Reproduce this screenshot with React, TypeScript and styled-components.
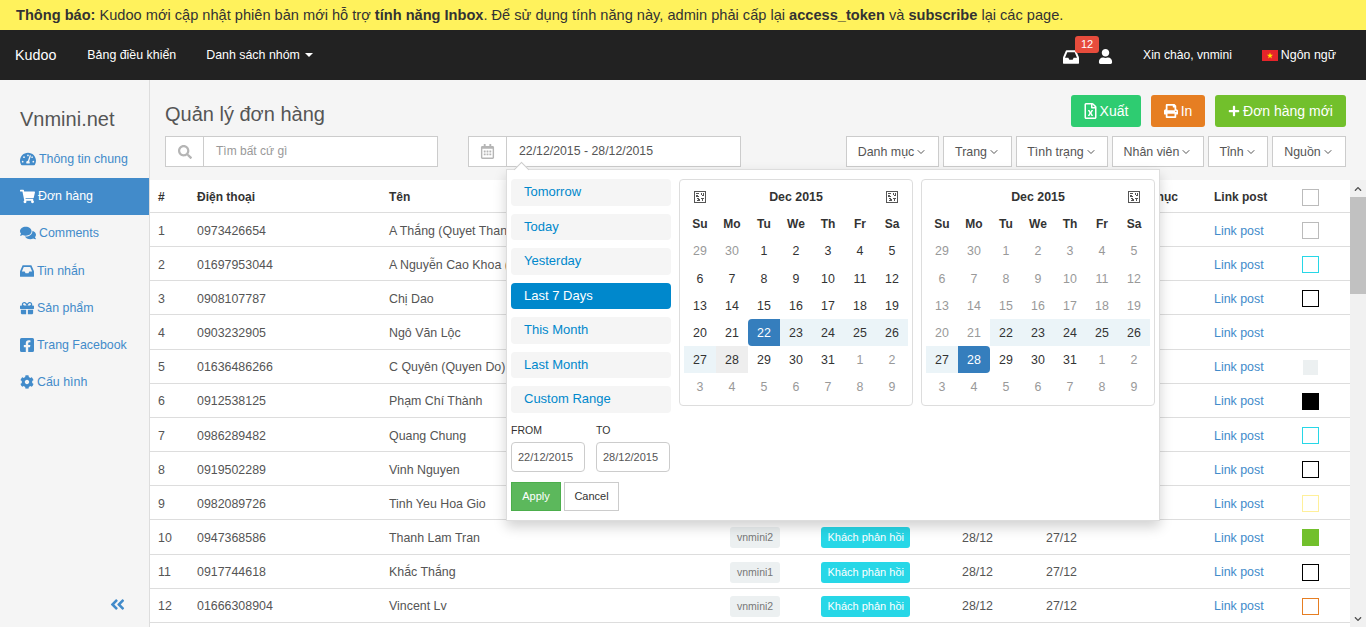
import React from 'react';
import styled, { createGlobalStyle } from 'styled-components';
import {
  FaTachometerAlt, FaShoppingCart, FaComments, FaGift, FaFacebookSquare, FaCog,
  FaSearch, FaRegCalendarAlt, FaAngleDoubleLeft, FaRegFileExcel, FaPrint, FaPlus, FaUser,
  FaChevronUp, FaChevronDown,
} from 'react-icons/fa';
import { ChevronDown } from 'lucide-react';

const Global = createGlobalStyle`
  html, body { margin: 0; padding: 0; height: 100%; overflow: hidden; background: #f5f5f5; }
  body { font-family: "Liberation Sans", Arial, sans-serif; font-size: 12.4px; color: #333; }
  * { box-sizing: border-box; }
`;

const Page = styled.div`width: 1366px; height: 627px; display: flex; flex-direction: column; overflow: hidden;`;
const Notice = styled.div`height: 30px; flex: none; background: #fff25c; padding: 0 16px; line-height: 30px; font-size: 14.6px; color: #333; white-space: nowrap; b { font-weight: 700; }`;
const Nav = styled.nav`height: 50px; flex: none; background: #222; color: #fff; display: flex; align-items: center; padding: 0 15px; font-size: 12.4px;`;
const Brand = styled.span`font-size: 14.3px; margin-right: 31px;`;
const NavLink = styled.span`margin-right: 30px; display: inline-flex; align-items: center; gap: 5px;`;
const Caret = styled.i`width: 0; height: 0; border-left: 4px solid transparent; border-right: 4px solid transparent; border-top: 4px solid #fff;`;
const NavRight = styled.div`margin-left: auto; display: flex; align-items: center;`;
const IconWrap = styled.span`position: relative; display: inline-flex; width: 17px; height: 17px; align-items: center; margin-right: 18px; margin-top: 3px;`;
const Count = styled.span`position: absolute; left: 12px; top: -12px; width: 24px; height: 17px; border-radius: 3px; background: #e74c3c; color: #fff; font-size: 11px; line-height: 17px; text-align: center;`;
const UserIcon = styled.span`display: inline-flex; margin-right: 30px; margin-top: 3px;`;
const Greeting = styled.span`margin-right: 30px; font-size: 12.1px;`;
const Lang = styled.span`display: inline-flex; align-items: center; gap: 3px; margin-right: 15px;`;

const Body = styled.div`flex: 1; display: flex; min-height: 0;`;
const Sidebar = styled.aside`width: 150px; flex: none; border-right: 1px solid #ddd; background: #f5f5f5; padding-top: 27px; position: relative;`;
const Site = styled.div`font-size: 20px; color: #555; padding-left: 20px; height: 24px; line-height: 24px; margin-bottom: 9.6px;`;
const SideItem = styled.div<{ $active?: boolean; $spaced?: boolean }>`
  display: flex; align-items: center; gap: 3px; height: 37px; margin-bottom: ${p => (p.$spaced ? 1 : 0)}px; padding-left: 20px; font-size: 12.4px;
  color: ${p => (p.$active ? '#fff' : '#428bca')};
  background: ${p => (p.$active ? '#428bca' : 'transparent')};
`;
const FbIcon = styled(FaFacebookSquare)`width: 14px; height: 16px;`;
const Collapse = styled.span`position: absolute; left: 109px; bottom: 14px; color: #428bca; display: inline-flex;`;

const Main = styled.main`flex: 1; min-width: 0; display: flex; flex-direction: column; position: relative;`;
const Head = styled.div`height: 100px; flex: none; padding: 0 20px 0 15px; display: flex; flex-direction: column;`;
const TitleRow = styled.div`height: 56px; display: flex; justify-content: space-between; padding-top: 15px;`;
const Title = styled.h1`margin: 4px 0 0; font-weight: 400; font-size: 20px; line-height: 30px; color: #555;`;
const Actions = styled.div`display: flex; gap: 10px;`;
const ActionBtn = styled.span<{ $bg: string; $w: number }>`
  height: 32px; width: ${p => p.$w}px; background: ${p => p.$bg}; color: #fff; border-radius: 3px; font-size: 14px;
  display: inline-flex; align-items: center; justify-content: center; gap: 3px;
`;
const FileIcon = styled(FaRegFileExcel)`width: 13px; height: 16px;`;
const FilterRow = styled.div`display: flex; align-items: flex-start;`;
const InputGroup = styled.div<{ $w: number; $mr?: number }>`
  width: ${p => p.$w}px; height: 31px; margin-right: ${p => p.$mr ?? 0}px; background: #fff; border: 1px solid #ccc; display: flex; flex: none;
`;
const Addon = styled.span`width: 38px; flex: none; display: flex; align-items: center; justify-content: center; color: #b5b5b5; border-right: 1px solid #ccc;`;
const InputText = styled.span<{ $muted?: boolean }>`padding-left: 12px; line-height: 28px; font-size: ${p => (p.$muted ? 12 : 12.3)}px; color: ${p => (p.$muted ? '#999' : '#555')};`;
const Filters = styled.div`margin-left: auto; display: flex; gap: 4px;`;
const FilterBtn = styled.span<{ $w: number }>`
  width: ${p => p.$w}px; height: 31px; background: #fff; border: 1px solid #ccc; color: #555; font-size: 12.4px;
  display: inline-flex; align-items: center; justify-content: center; gap: 1px;
`;

const TableArea = styled.div`flex: 1; min-height: 0; display: flex;`;
const TableBox = styled.div`width: 1200px; background: #fff; overflow: hidden;`;
const COLS = '39px 192px 341px 91px 141px 84px 74px 94px 88px 56px';
const Row = styled.div<{ $head?: boolean }>`
  display: grid; grid-template-columns: ${COLS}; height: ${p => (p.$head ? 33 : 34.17)}px; align-items: center; padding-top: 2px;
  border-bottom: 1px solid #ddd; font-weight: ${p => (p.$head ? 700 : 400)}; color: ${p => (p.$head ? '#333' : '#555')};
  font-size: ${p => (p.$head ? 12 : 12.4)}px; white-space: nowrap;
`;
const Cell = styled.div`padding-left: 8px;`;
const LinkPost = styled.span`color: #428bca;`;
const Swatch = styled.i<{ $border?: string; $fill?: string }>`
  display: block; width: 17px; height: 17px; border: 1px solid ${p => p.$border ?? 'transparent'}; background: ${p => p.$fill ?? 'transparent'};
  background-clip: padding-box;
`;
const GreyTag = styled.span`display: inline-block; height: 21px; line-height: 21px; padding: 0 7px; border-radius: 3px; background: #ecf0f1; color: #777; font-size: 10.5px;`;
const StatusTag = styled.span`display: inline-block; height: 21px; line-height: 21px; padding: 0 6.5px; border-radius: 3px; background: #27d7e7; color: #fff; font-size: 11px;`;

const Scrollbar = styled.div`width: 16px; flex: none; background: #f1f1f1; display: flex; flex-direction: column; align-items: center; color: #505050;`;
const ArrowBox = styled.span`height: 17px; display: flex; align-items: center; justify-content: center; flex: none;`;
const Thumb = styled.div`width: 16px; height: 97px; background: #c1c1c1; flex: none;`;
const Spacer = styled.div`flex: 1;`;

const Popup = styled.div`
  position: absolute; left: 356px; top: 89px; width: 654px; height: 352px; background: #fff; border: 1px solid #ddd;
  box-shadow: 0 6px 12px rgba(0,0,0,.18); padding: 9px 8px 0 4px; display: flex; z-index: 5;
  &:before { content: ''; position: absolute; left: 9px; top: -6px; width: 10px; height: 10px; background: #fff; border-left: 1px solid #ccc; border-top: 1px solid #ccc; transform: rotate(45deg); }
`;
const Ranges = styled.div`width: 160px; flex: none; margin-right: 8px;`;
const RangeItem = styled.div<{ $active?: boolean }>`
  height: 26.5px; margin-bottom: 8px; border-radius: 4px; padding-left: 13px; line-height: 25px; font-size: 13px;
  background: ${p => (p.$active ? '#08c' : '#f5f5f5')}; color: ${p => (p.$active ? '#fff' : '#08c')};
`;
const DateFields = styled.div`display: flex; gap: 11px; margin-top: 10.5px;`;
const DateField = styled.label`display: flex; flex-direction: column; font-size: 10.5px; color: #333; line-height: 14px;`;
const DateBox = styled.span`width: 74px; height: 30px; margin-top: 5px; border: 1px solid #ccc; border-radius: 4px; color: #555; font-size: 11px; line-height: 28px; padding-left: 6px;`;
const ApplyRow = styled.div`display: flex; gap: 3px; margin-top: 10px;`;
const Apply = styled.span`width: 50px; height: 29px; background: #5cb85c; border: 1px solid #4cae4c; color: #fff; font-size: 11px; line-height: 27px; text-align: center;`;
const Cancel = styled.span`width: 55px; height: 29px; background: #fff; border: 1px solid #ccc; color: #333; font-size: 11px; line-height: 27px; text-align: center;`;

const Cal = styled.div`width: 234px; height: 227px; border: 1px solid #ddd; border-radius: 4px; padding: 3px 4px; margin-right: 8px; flex: none;`;
const CalGrid = styled.div`display: grid; grid-template-columns: repeat(7, 32px); grid-auto-rows: 27.2px; justify-content: start;`;
const CalHead = styled.div`grid-column: 2 / 7; font-weight: 700; font-size: 12.4px; text-align: center; line-height: 29px;`;
const NavGlyph = styled.div`display: flex; align-items: center; justify-content: center;`;
const Dow = styled.div`font-weight: 700; text-align: center; line-height: 29px; font-size: 12px;`;
const Day = styled.div<{ $off?: boolean; $inRange?: boolean; $start?: boolean; $end?: boolean; $today?: boolean }>`
  text-align: center; line-height: 29px; font-size: 12.4px;
  color: ${p => (p.$start || p.$end ? '#fff' : p.$off ? '#999' : '#333')};
  background: ${p => (p.$start || p.$end ? '#357ebd' : p.$today ? '#eee' : p.$inRange ? '#ebf4f8' : 'transparent')};
  border-radius: ${p => (p.$start ? '4px 0 0 4px' : p.$end ? '0 4px 4px 0' : '0')};
`;

const InboxIcon = ({ size }: { size: number }) => (
  <svg width={size} height={size} viewBox="0 0 1536 1536" fill="currentColor">
    <path transform="translate(0 -128)" d="M1023 960h316q-1-3-2.500-8.500t-2.500-7.500l-212-496h-708l-212 496q-1 3-2.500 8.500t-2.500 7.500h316l95 192h320zm513 30v482q0 26-19 45t-45 19h-1408q-26 0-45-19t-19-45v-482q0-62 25-123l238-552q10-25 36.500-42t52.500-17h832q26 0 52.500 17t36.500 42l238 552q25 61 25 123z" />
  </svg>
);

const Tofu = () => (
  <svg width="12" height="12" viewBox="0 0 12 12" fill="none" stroke="#555" strokeWidth="1" shapeRendering="crispEdges">
    <rect x=".5" y=".5" width="11" height="11" />
    <path d="M2 2.5h3M2 4h2M2 5.5h3M7 2v2M9.5 2v2M7.5 4.5h2M2.5 7.5h2v2h-2M5 9.5v-2M7 7.5h3M8.5 7v3" />
  </svg>
);

const Flag = () => (
  <svg width="16" height="11" viewBox="0 0 16 11">
    <rect width="16" height="11" fill="#e5242a" />
    <polygon fill="#ffe400" points="8,2.5 8.8,4.8 11.1,4.8 9.2,6.2 9.9,8.5 8,7.1 6.1,8.5 6.8,6.2 4.9,4.8 7.2,4.8" />
  </svg>
);

type R = { phone: string; name: string; sw?: { b?: string; f?: string }; tag?: string };
const rows: R[] = [
  { phone: '0973426654', name: 'A Thắng (Quyet Thang', sw: { b: '#bbb' } },
  { phone: '01697953044', name: 'A Nguyễn Cao Khoa (', sw: { b: '#27d7e7' } },
  { phone: '0908107787', name: 'Chị Dao', sw: { b: '#000' } },
  { phone: '0903232905', name: 'Ngô Văn Lộc' },
  { phone: '01636486266', name: 'C Quyên (Quyen Do)', sw: { f: '#ecf0f1', b: '#fff' } },
  { phone: '0912538125', name: 'Phạm Chí Thành', sw: { f: '#000', b: '#000' } },
  { phone: '0986289482', name: 'Quang Chung', sw: { b: '#27d7e7' } },
  { phone: '0919502289', name: 'Vinh Nguyen', sw: { b: '#000' } },
  { phone: '0982089726', name: 'Tinh Yeu Hoa Gio', sw: { b: '#fff09a' } },
  { phone: '0947368586', name: 'Thanh Lam Tran', sw: { f: '#72c02c', b: '#72c02c' }, tag: 'vnmini2' },
  { phone: '0917744618', name: 'Khắc Thắng', sw: { b: '#000' }, tag: 'vnmini1' },
  { phone: '01666308904', name: 'Vincent Lv', sw: { b: '#e67e22' }, tag: 'vnmini2' },
];

type D = { n: number; off?: boolean; inRange?: boolean; start?: boolean; end?: boolean; today?: boolean };
const seq = (a: number, b: number) => Array.from({ length: b - a + 1 }, (_, i) => a + i);
const allDays = [...seq(29, 30), ...seq(1, 31), ...seq(1, 9)];
const leftDays: D[] = allDays.map((n, i) => {
  const off = i < 2 || i > 32;
  const inRange = i >= 23 && i <= 29;
  return { n, off, inRange: inRange && n !== 28, start: i === 23, today: i === 29 };
});
const rightDays: D[] = allDays.map((n, i) => {
  const off = i <= 22 || i > 32;
  const inRange = i >= 23 && i <= 28;
  return { n, off, inRange, end: i === 29 };
});
const dows = ['Su', 'Mo', 'Tu', 'We', 'Th', 'Fr', 'Sa'];

const Calendar = ({ days, side }: { days: D[]; side: 'l' | 'r' }) => (
  <Cal>
    <CalGrid>
      <NavGlyph>{side === 'l' && <Tofu />}</NavGlyph>
      <CalHead>Dec 2015</CalHead>
      <NavGlyph><Tofu /></NavGlyph>
      {dows.map(d => <Dow key={d}>{d}</Dow>)}
      {days.map((d, i) => (
        <Day key={i} $off={d.off} $inRange={d.inRange} $start={d.start} $end={d.end} $today={d.today}>{d.n}</Day>
      ))}
    </CalGrid>
  </Cal>
);

const filters: [string, number][] = [['Danh mục', 93], ['Trang', 69], ['Tình trạng', 92], ['Nhân viên', 92], ['Tỉnh', 60], ['Nguồn', 74]];

export default function App() {
  return (
    <Page>
      <Global />
      <Notice>
        <b>Thông báo:</b> Kudoo mới cập nhật phiên bản mới hỗ trợ <b>tính năng Inbox</b>. Để sử dụng tính năng này, admin phải cấp lại <b>access_token</b> và <b>subscribe</b> lại các page.
      </Notice>
      <Nav>
        <Brand>Kudoo</Brand>
        <NavLink>Bảng điều khiển</NavLink>
        <NavLink>Danh sách nhóm <Caret /></NavLink>
        <NavRight>
          <IconWrap><InboxIcon size={16} /><Count>12</Count></IconWrap>
          <UserIcon><FaUser size={15} /></UserIcon>
          <Greeting>Xin chào, vnmini</Greeting>
          <Lang><Flag /> Ngôn ngữ</Lang>
        </NavRight>
      </Nav>
      <Body>
        <Sidebar>
          <Site>Vnmini.net</Site>
          <SideItem><FaTachometerAlt size={16} /> Thông tin chung</SideItem>
          <SideItem $active><FaShoppingCart size={15} color="#fff" /> Đơn hàng</SideItem>
          <SideItem $spaced><FaComments size={16} /> Comments</SideItem>
          <SideItem><InboxIcon size={14} /> Tin nhắn</SideItem>
          <SideItem><FaGift size={14} /> Sản phẩm</SideItem>
          <SideItem><FbIcon /> Trang Facebook</SideItem>
          <SideItem><FaCog size={14} /> Cấu hình</SideItem>
          <Collapse><FaAngleDoubleLeft size={17} /></Collapse>
        </Sidebar>
        <Main>
          <Head>
            <TitleRow>
              <Title>Quản lý đơn hàng</Title>
              <Actions>
                <ActionBtn $bg="#2ecc71" $w={70}><FileIcon /> Xuất</ActionBtn>
                <ActionBtn $bg="#e67e22" $w={54}><FaPrint size={14} /> In</ActionBtn>
                <ActionBtn $bg="#72c02c" $w={131}><FaPlus size={12} /> Đơn hàng mới</ActionBtn>
              </Actions>
            </TitleRow>
            <FilterRow>
              <InputGroup $w={273} $mr={30}>
                <Addon><FaSearch size={14} /></Addon>
                <InputText $muted>Tìm bất cứ gì</InputText>
              </InputGroup>
              <InputGroup $w={273}>
                <Addon><FaRegCalendarAlt size={15} /></Addon>
                <InputText>22/12/2015 - 28/12/2015</InputText>
              </InputGroup>
              <Filters>
                {filters.map(([f, w]) => <FilterBtn key={f} $w={w}>{f} <ChevronDown size={12} strokeWidth={2} /></FilterBtn>)}
              </Filters>
            </FilterRow>
          </Head>
          <TableArea>
            <TableBox>
              <Row $head>
                <Cell>#</Cell><Cell>Điện thoại</Cell><Cell>Tên</Cell><Cell /><Cell />
                <Cell /><Cell /><Cell>Danh mục</Cell><Cell>Link post</Cell>
                <Cell><Swatch $border="#bbb" /></Cell>
              </Row>
              {rows.map((r, i) => (
                <Row key={r.phone}>
                  <Cell>{i + 1}</Cell>
                  <Cell>{r.phone}</Cell>
                  <Cell>{r.name}</Cell>
                  <Cell>{r.tag && <GreyTag>{r.tag}</GreyTag>}</Cell>
                  <Cell>{r.tag && <StatusTag>Khách phản hồi</StatusTag>}</Cell>
                  <Cell>{r.tag && '28/12'}</Cell>
                  <Cell>{r.tag && '27/12'}</Cell>
                  <Cell />
                  <Cell><LinkPost>Link post</LinkPost></Cell>
                  <Cell>{r.sw && <Swatch $border={r.sw.b} $fill={r.sw.f} />}</Cell>
                </Row>
              ))}
            </TableBox>
            <Scrollbar>
              <ArrowBox><FaChevronUp size={8} /></ArrowBox>
              <Thumb />
              <Spacer />
              <ArrowBox><FaChevronDown size={8} /></ArrowBox>
            </Scrollbar>
          </TableArea>
          <Popup>
            <Ranges>
              <RangeItem>Tomorrow</RangeItem>
              <RangeItem>Today</RangeItem>
              <RangeItem>Yesterday</RangeItem>
              <RangeItem $active>Last 7 Days</RangeItem>
              <RangeItem>This Month</RangeItem>
              <RangeItem>Last Month</RangeItem>
              <RangeItem>Custom Range</RangeItem>
              <DateFields>
                <DateField>FROM<DateBox>22/12/2015</DateBox></DateField>
                <DateField>TO<DateBox>28/12/2015</DateBox></DateField>
              </DateFields>
              <ApplyRow><Apply>Apply</Apply><Cancel>Cancel</Cancel></ApplyRow>
            </Ranges>
            <Calendar days={leftDays} side="l" />
            <Calendar days={rightDays} side="r" />
          </Popup>
        </Main>
      </Body>
    </Page>
  );
}
